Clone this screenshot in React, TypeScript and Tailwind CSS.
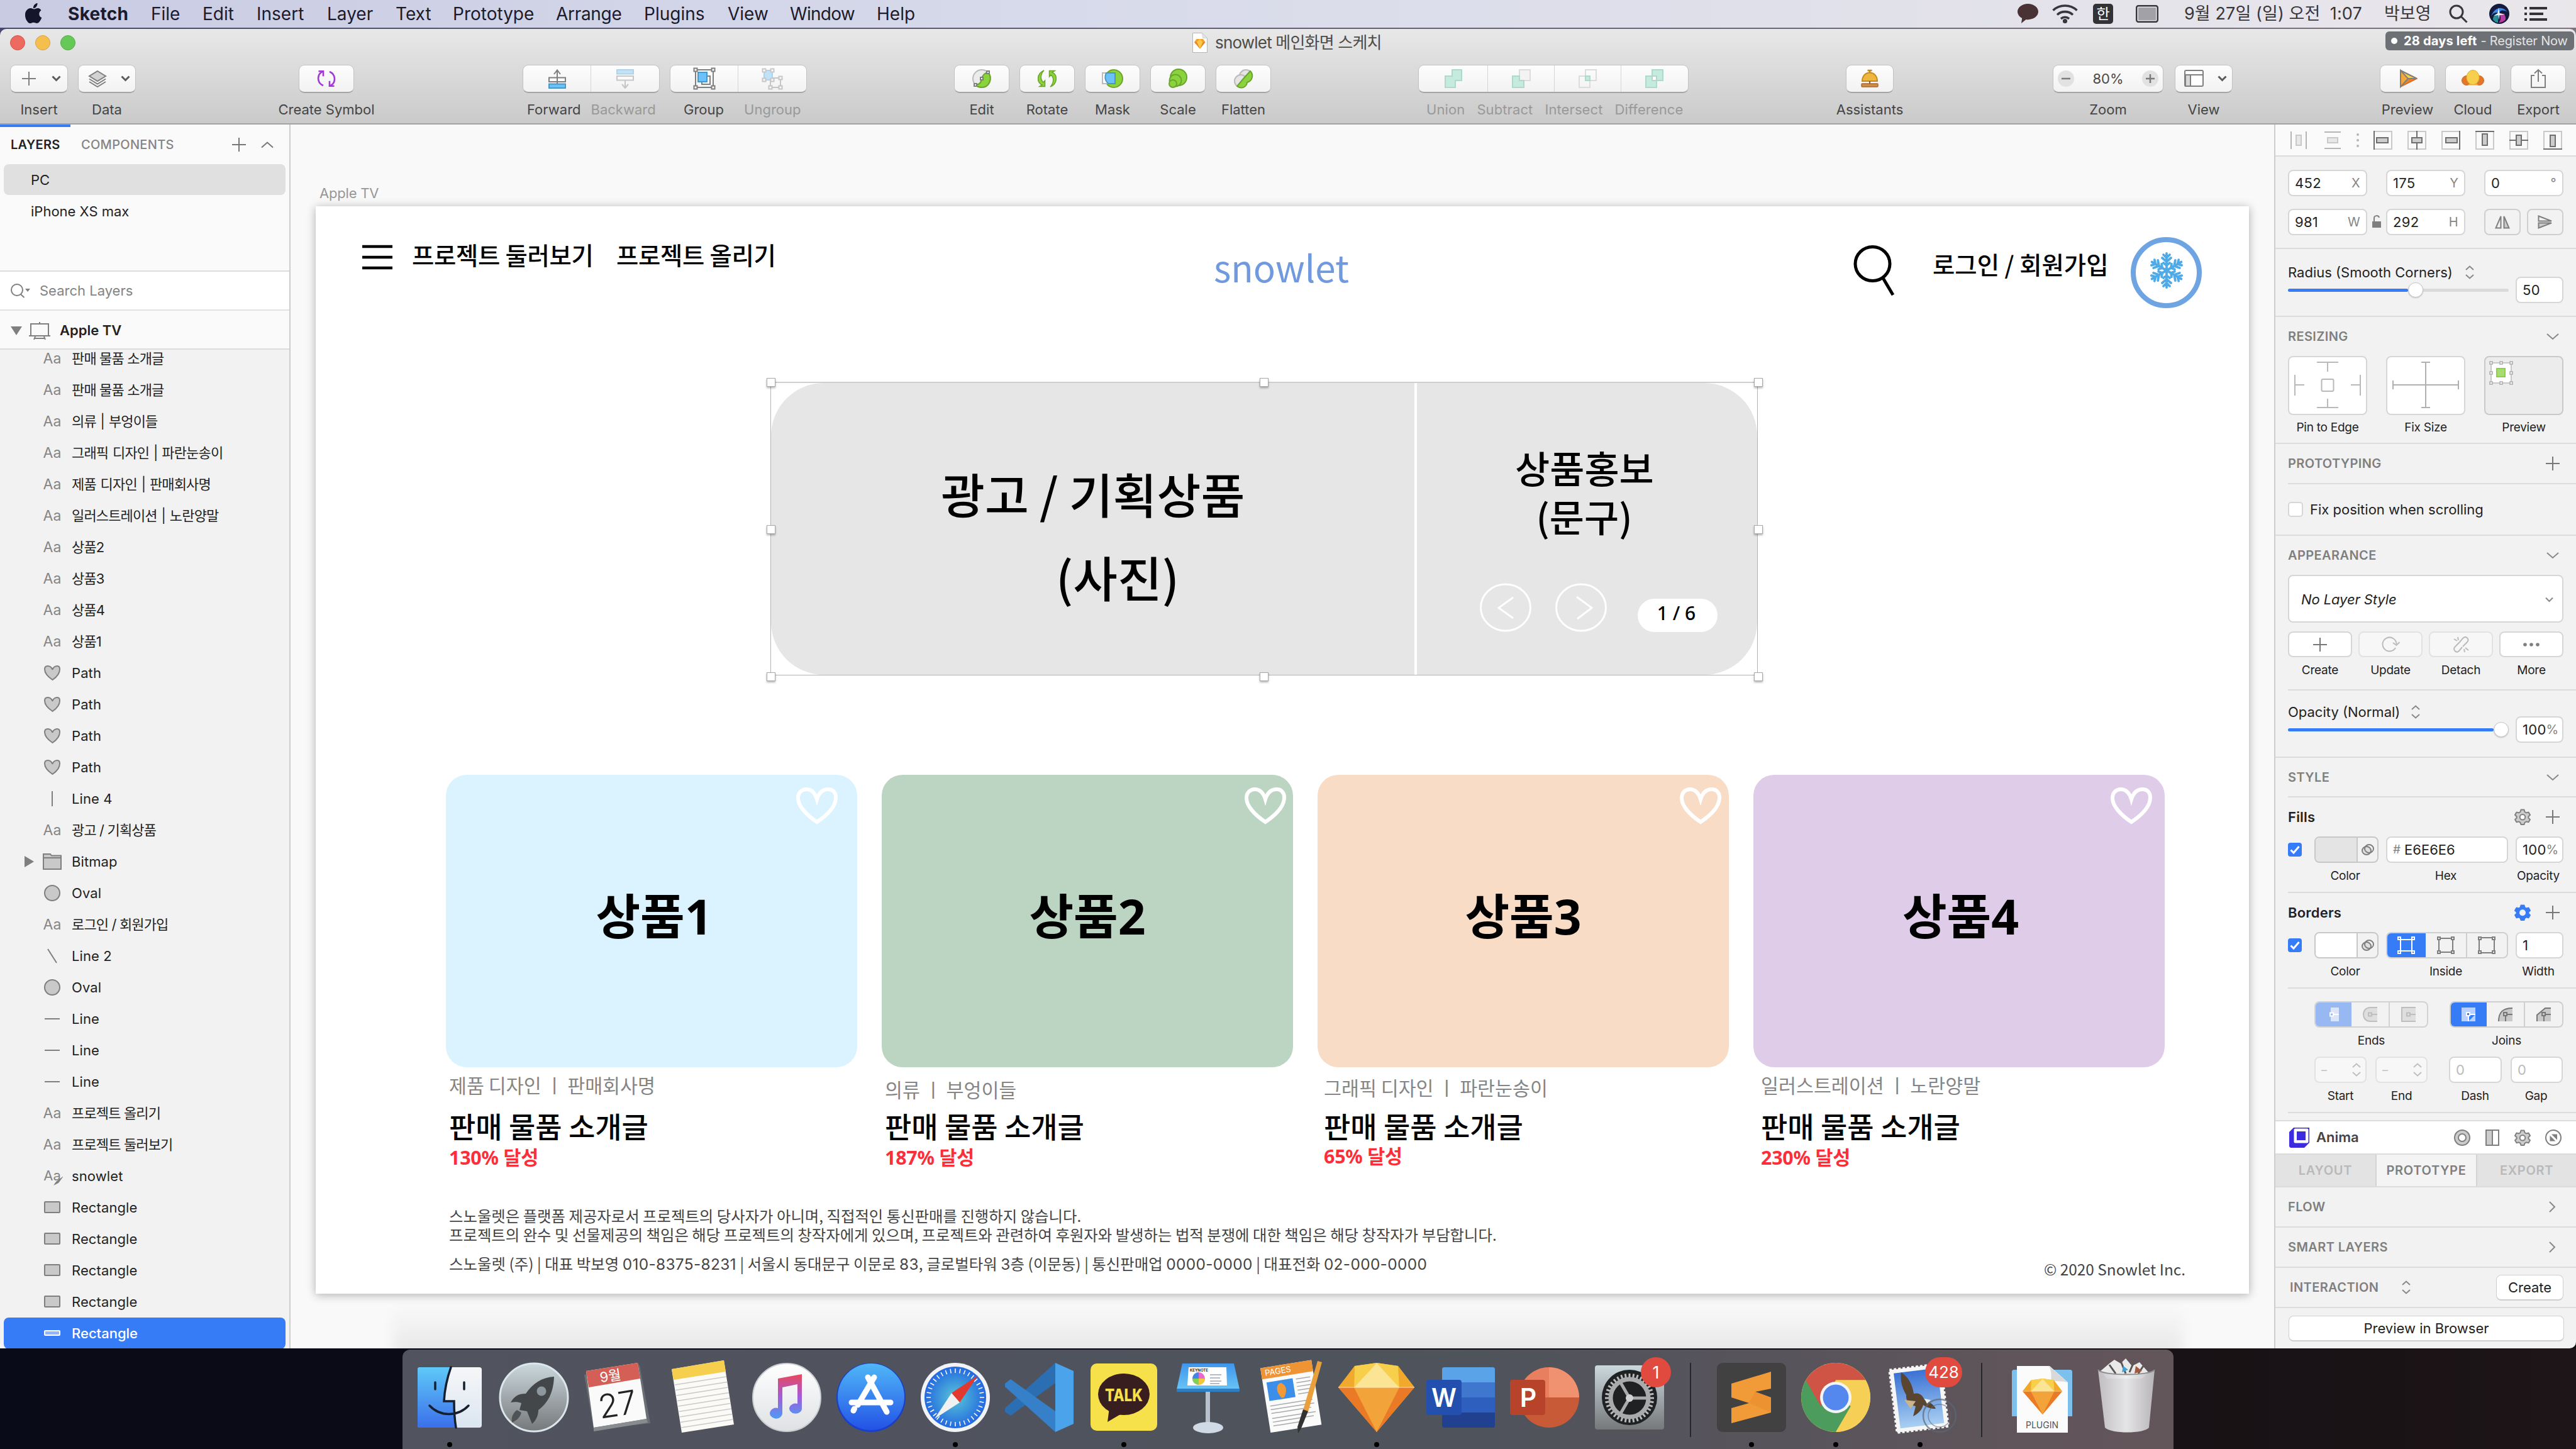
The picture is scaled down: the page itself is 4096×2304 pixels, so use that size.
import React from 'react';

type Kids = { children?: React.ReactNode };

/* ---------- menu bar ---------- */

const menus: [string, string][] = [
  ['Sketch', 'w-[132px] font-bold tracking-[0.3px]'],
  ['File', 'w-[82px]'],
  ['Edit', 'w-[86px]'],
  ['Insert', 'w-[112px]'],
  ['Layer', 'w-[109px]'],
  ['Text', 'w-[91px]'],
  ['Prototype', 'w-[164px]'],
  ['Arrange', 'w-[140px] tracking-[-0.3px]'],
  ['Plugins', 'w-[133px]'],
  ['View', 'w-[99px]'],
  ['Window', 'w-[138px] tracking-[-0.7px]'],
  ['Help', 'w-[80px]'],
];

function MenuBar() {
  return (
    <div className="flex h-[44px] shrink-0 items-center bg-linear-to-r from-[#c9cbe3] via-[#d7daea] via-40% to-[#eae7eb] text-[28px] leading-[44px] text-[#1b1b2e]">
      <div className="flex w-[108px] justify-center">
        <svg className="h-[34px] w-[28px]" viewBox="0 0 28 34" fill="#14142a">
          <path d="M19.5 0c.3 2.200-.6 4.200-1.800 5.700-1.200 1.500-3 2.500-4.800 2.400-.3-2 .7-4.200 1.800-5.500C15.900 1.200 17.900.2 19.500 0zM25.500 11.600c-2 1.300-3.200 3.200-3.200 5.600 0 2.800 1.600 5 4 5.900-.5 1.600-1.300 3.200-2.300 4.700-1.400 2.100-2.900 4.200-5.200 4.200-2.200 0-2.900-1.300-5.500-1.300s-3.400 1.300-5.500 1.400c-2.200.1-3.900-2.200-5.300-4.300C-.3 23.500-1.300 16 2 11.800c1.600-2.400 4.200-3.800 6.800-3.800 2.200 0 3.900 1.400 5.500 1.400 1.500 0 3.300-1.600 6-1.500 1.100 0 3.700.5 5.200 3.700z" />
        </svg>
      </div>
      {menus.map(([t, c]) => (
        <div key={t} className={c}>{t}</div>
      ))}
      <div className="flex-1" />
      <div className="flex w-[888px] items-center text-[#37363b]">
        <svg className="mr-[22px] h-[32px] w-[33px]" viewBox="0 0 33 32" fill="#4a3133">
          <path d="M16.500 0C25.600 0 33 5.600 33 12.600S25.600 25.200 16.500 25.200c-1 0-2-.1-3-.2L6 31l1.200-8C2.900 20.700 0 16.900 0 12.600 0 5.600 7.400 0 16.500 0z" />
        </svg>
        <svg className="mr-[24px] h-[30px] w-[41px]" viewBox="0 0 41 30" fill="none" stroke="#37363b" strokeWidth="3.600">
          <path d="M1.500 9.500C12-.5 29-.5 39.500 9.500M8 16.500c7-6.500 18-6.500 25 0M14 22.800c3.700-3.400 9.300-3.400 13 0" />
          <circle cx="20.500" cy="26.500" r="1.800" />
        </svg>
        <div className="mr-[36px] flex h-[32px] w-[32px] items-center justify-center rounded-[5px] bg-[#333237] text-[23px] leading-none text-white">한</div>
        <svg className="mr-[41px] h-[28px] w-[36px]" viewBox="0 0 36 28">
          <rect x="1.200" y="1.200" width="33.600" height="25.600" rx="3" fill="none" stroke="#37363b" strokeWidth="2.400" />
          <rect x="4" y="4" width="28" height="20" fill="#a3a1a8" />
        </svg>
        <div className="w-[318px] text-[27px] tracking-[0.1px] whitespace-pre">9월 27일 (일) 오전  1:07</div>
        <div className="w-[103px] text-[27px]">박보영</div>
        <svg className="mr-[34px] h-[30px] w-[30px]" viewBox="0 0 30 30" fill="none" stroke="#37363b" strokeWidth="3">
          <circle cx="12" cy="12" r="10" /><path d="M19 19l9.500 9.500" />
        </svg>
        <svg className="mr-[24px] h-[32px] w-[32px]" viewBox="0 0 32 32">
          <circle cx="16" cy="16" r="16" fill="#141a3c" />
          <path d="M3 20C8 6 20 2 29 13 22 9 16 10 16 16 12 12 6 14 3 20z" fill="#3a8bf0" />
          <path d="M16 16c6-2 11 2 10 9-3 4-8 5-11 5 4-4 4-9 1-14z" fill="#b83ba0" />
          <path d="M16 16C10 15 6 19 6 25c2 3 5 5 8 5 0-5 0-9 2-14z" fill="#2cc5c0" opacity=".7" />
          <path d="M15 6l1.500 9 9 2-9 1-1 8-1-8-7 1 6-4z" fill="#fff" opacity=".9" />
        </svg>
        <svg className="h-[22px] w-[36px]" viewBox="0 0 36 22" fill="#333237">
          <path d="M0 0h4v4H0zM8 0h28v4H8zM0 9h4v4H0zM8 9h22v4H8zM0 18h4v4H0zM8 18h28v4H8z" />
        </svg>
      </div>
    </div>
  );
}

/* ---------- toolbar ---------- */

const G = '#7f7f7f';

function Cell({ children, className = '' }: Kids & { className?: string }) {
  return <div className={`flex h-full items-center justify-center ${className}`}>{children}</div>;
}

function Ico({ children, dim }: Kids & { dim?: boolean }) {
  return (
    <svg className={`h-[44px] w-[44px] shrink-0 ${dim ? 'opacity-40' : ''}`} viewBox="0 0 44 44" fill="none" stroke={G} strokeWidth="2">
      {children}
    </svg>
  );
}

const box = 'flex h-[45px] w-full overflow-hidden rounded-[9px] border border-[#c2c2c2] border-b-2 border-b-[#a5a5a5] bg-linear-to-b from-[#fdfdfd] to-[#f2f2f2]';

function Tool({ w, label, children }: Kids & { w: string; label: string }) {
  return (
    <div className={`flex shrink-0 flex-col items-center ${w}`}>
      <div className={`${box} items-center justify-center`}>{children}</div>
      <div className="mt-[9px] text-[22px] leading-[34px] whitespace-nowrap text-[#454545]">{label}</div>
    </div>
  );
}

function Chev() {
  return <svg className="h-[10px] w-[15px]" viewBox="0 0 15 10" fill="none" stroke="#5a5a5a" strokeWidth="3"><path d="M1.500 1.500l6 6 6-6" /></svg>;
}

function Handles({ pts, s = 5 }: { pts: [number, number][]; s?: number }) {
  return <>{pts.map(([x, y], i) => <rect key={i} x={x - s / 2} y={y - s / 2} width={s} height={s} fill="#fff" />)}</>;
}

function Toolbar() {
  const green = '#8bd33e';
  const dg = '#6aa52a';
  return (
    <div className="flex h-[152px] shrink-0 flex-col border-b-2 border-[#a3a3a3] bg-linear-to-b from-[#e8e8e8] to-[#cacaca]">
      <div className="flex h-[44px] items-center">
        <div className="flex w-[1896px] gap-[16px] pl-[16px]">
          <div className="h-[24px] w-[24px] rounded-full border border-[#d6544a] bg-[#ec6a5f]" />
          <div className="h-[24px] w-[24px] rounded-full border border-[#d8a13a] bg-[#f5bf4f]" />
          <div className="h-[24px] w-[24px] rounded-full border border-[#54ac41] bg-[#66c957]" />
        </div>
        <svg className="mr-[12px] h-[32px] w-[24px]" viewBox="0 0 24 32">
          <path d="M.5.5h15l8 8v23H.5z" fill="#fff" stroke="#b5b5b5" />
          <path d="M15.500.5l1 8h7z" fill="#e4e4e4" stroke="#c4c4c4" strokeWidth=".6" />
          <path d="M3 15l3.500-5h10.500L20.500 15 12 25.500z" fill="#f0a02c" /><path d="M3 15h17.500L12 25.500z" fill="#e8832a" /><path d="M7 15l5-5 4.500 5L12 25.500z" fill="#fbc847" />
        </svg>
        <div className="text-[26px] leading-[44px] tracking-[-0.800px] whitespace-nowrap text-[#4c4c4c]">snowlet 메인화면 스케치</div>
        <div className="ml-auto mt-[-6px] mr-[3px] flex h-[30px] w-[300px] items-center rounded-[6px] bg-[#6d7176] text-[20px] leading-[30px] whitespace-nowrap text-[#e4e4e4]">
          <span className="ml-[9px] mr-[10px] h-[10px] w-[10px] rounded-full bg-white" />
          <b className="tracking-[0.200px] text-white">28 days left</b><span className="ml-[6px] tracking-[-0.2px]">- Register Now</span>
        </div>
      </div>
      <div className="mt-[13px] flex pl-[16px]">
        <Tool w="w-[92px] mr-[16px]" label="Insert">
          <svg className="ml-[7px] mr-[24px] h-[24px] w-[24px]" viewBox="0 0 24 24" stroke={G} strokeWidth="2"><path d="M12 1v22M1 12h22" /></svg><Chev />
        </Tool>
        <Tool w="w-[92px] mr-[259px]" label="Data">
          <svg className="ml-[6px] mr-[22px] h-[27px] w-[30px]" viewBox="0 0 30 27" fill="none" stroke={G} strokeWidth="2"><path d="M15 1l13 8-13 8L2 9z" fill="#d2d2d2" /><path d="M2 13.500l13 8 13-8M2 18l13 8 13-8" /></svg><Chev />
        </Tool>
        <Tool w="w-[88px] mr-[268px]" label="Create Symbol">
          <Ico><g stroke="#a238d6" strokeWidth="2.600"><path d="M17 33C7 29 6 15 16.500 10.500M27 11c10 4 11 18 .5 22.500" /><path d="M9.500 10.200h7.500v8M34.500 33.800H27v-8" /></g></Ico>
        </Tool>
        <div className="mr-[16px] w-[218px]">
          <div className={box}>
            <Cell className="w-[109px] border-r border-[#d5d5d5]"><Ico><path d="M22 37V9M17 15l5-6.500 5 6.500" /><rect x="9" y="20.500" width="26" height="6.500" fill="#fff" /><path d="M22 29v-9" /><rect x="9" y="30.500" width="26" height="6.500" fill="#6bc1fa" stroke="#4a97c6" /></Ico></Cell>
            <Cell className="w-[109px]"><Ico dim><path d="M22 24v13M17 31l5 6 5-6" /><rect x="9" y="8" width="26" height="6.500" fill="#6bc1fa" stroke="#4a97c6" /><rect x="9" y="18" width="26" height="6.500" fill="#fff" /></Ico></Cell>
          </div>
          <div className="mt-[9px] flex gap-[16px] pl-[7px] text-[22px] leading-[34px] whitespace-nowrap text-[#454545]"><span>Forward</span><span className="text-[#999]">Backward</span></div>
        </div>
        <div className="w-[218px] mr-[234px]">
          <div className={box}>
            <Cell className="w-[109px] border-r border-[#d5d5d5]"><Ico><rect x="8" y="8" width="28" height="28" /><rect x="18" y="18" width="13" height="13" fill="#fff" /><rect x="12" y="12" width="14" height="15" fill="#6bc1fa" stroke="#4a97c6" /><Handles pts={[[8, 8], [36, 8], [8, 36], [36, 36]]} /></Ico></Cell>
            <Cell className="w-[109px]"><Ico dim><rect x="19" y="21" width="16" height="15" /><rect x="9" y="9" width="13" height="15" fill="#6bc1fa" stroke="#4a97c6" /><Handles pts={[[9, 9], [22, 9], [9, 24], [22, 24], [35, 21], [35, 36], [19, 36]]} /></Ico></Cell>
          </div>
          <div className="mt-[9px] flex gap-[32px] pl-[22px] text-[22px] leading-[34px] whitespace-nowrap text-[#454545]"><span>Group</span><span className="text-[#999]">Ungroup</span></div>
        </div>
        <Tool w="w-[88px] mr-[16px]" label="Edit"><Ico><circle cx="22" cy="22" r="14" fill="#ececec" stroke="#bbb" /><path d="M32 12c8 9 2 24-10 24-5 0-8-2-10-4 6 0 9-3 10-10 1-5 5-9 10-10z" fill={green} stroke={dg} /><Handles pts={[[32, 12], [22, 22], [12, 32]]} s={4} /></Ico></Tool>
        <Tool w="w-[88px] mr-[16px]" label="Rotate"><Ico><g fill={green} stroke={dg} strokeWidth="1.500"><path d="M17 9C5 14 5 28 14 32l-4 2.500h8.500V25l-2.500 3C10 23 12 14 17 9zM27 35c12-5 12-19 3-23l4-2.500h-8.500V19l2.500-3c6 5 4 14-1 19z" /></g></Ico></Tool>
        <Tool w="w-[88px] mr-[16px]" label="Mask"><Ico><circle cx="24" cy="22" r="14" fill={green} stroke={dg} /><rect x="6" y="13" width="20" height="17" stroke="#bbb" fill="#fff" /><path d="M12 13h14v17H15c-5-5-6-11-3-17z" fill="#6bc1fa" stroke="#4a97c6" /></Ico></Tool>
        <Tool w="w-[88px] mr-[16px]" label="Scale"><Ico><g fill={green} stroke={dg}><circle cx="23" cy="20" r="13" /><circle cx="18" cy="25" r="9.500" /><circle cx="14" cy="30" r="6" /></g></Ico></Tool>
        <Tool w="w-[88px] mr-[234px]" label="Flatten"><Ico><circle cx="26" cy="18" r="10" fill="#e5e5e5" stroke="#bbb" /><circle cx="18" cy="26" r="10" fill="#e5e5e5" stroke="#bbb" /><path d="M33 10c6 6 3 16-5 18-1 8-9 11-16 6L23 21z" fill={green} stroke={dg} /></Ico></Tool>
        <div className="w-[430px] mr-[250px]">
          <div className={box}>
            <Cell className="w-[110px] border-r border-[#d5d5d5]"><Ico><path d="M20 8h15v17h-10v11H9V18h11z" fill="#c5ebde" stroke="#b0d9ca" /></Ico></Cell>
            <Cell className="w-[106px] border-r border-[#d5d5d5]"><Ico><rect x="19" y="8" width="17" height="17" fill="#f3f3f3" stroke="#dcdcdc" /><path d="M8 18h11v7h7v11H8z" fill="#c5ebde" stroke="#b0d9ca" /></Ico></Cell>
            <Cell className="w-[106px] border-r border-[#d5d5d5]"><Ico><rect x="18" y="8" width="17" height="17" stroke="#dcdcdc" /><rect x="8" y="18" width="17" height="18" stroke="#dcdcdc" /><rect x="18" y="18" width="7" height="7" fill="#c5ebde" stroke="#b0d9ca" /></Ico></Cell>
            <Cell className="w-[106px]"><Ico><path d="M18 8h17v17H25v11H8V18h10z" fill="#c5ebde" stroke="#b0d9ca" /><rect x="18" y="18" width="7" height="7" fill="#fff" stroke="#b0d9ca" /></Ico></Cell>
          </div>
          <div className="mt-[9px] flex gap-[19px] pl-[13px] text-[22px] leading-[34px] tracking-[0.100px] whitespace-nowrap text-[#999]"><span>Union</span><span>Subtract</span><span>Intersect</span><span>Difference</span></div>
        </div>
        <Tool w="w-[76px] mr-[253px]" label="Assistants"><Ico><rect x="9" y="30" width="26" height="5" rx="1" fill="#d08a4a" stroke="#a86a30" strokeWidth="1.500" /><path d="M22 8v4M18.500 9h7" stroke="#c68a1c" strokeWidth="2.500" /><path d="M10 26c0-18 24-18 24 0z" fill="#edb63c" stroke="#c68a1c" /><path d="M22 26v4" stroke="#8a5a20" strokeWidth="2" /></Ico></Tool>
        <Tool w="w-[176px] mr-[18px]" label="Zoom">
          <div className="flex w-full items-center justify-between px-[7px] text-[22px] leading-[40px] text-[#4a4a4a]">
            <svg className="h-[26px] w-[26px]" viewBox="0 0 26 26"><circle cx="13" cy="13" r="13" fill="#e2e2e2" /><path d="M6 13h14" stroke="#7a7a7a" strokeWidth="2.500" /></svg>
            80%
            <svg className="h-[26px] w-[26px]" viewBox="0 0 26 26"><circle cx="13" cy="13" r="13" fill="#e2e2e2" /><path d="M6 13h14M13 6v14" stroke="#7a7a7a" strokeWidth="2.500" /></svg>
          </div>
        </Tool>
        <Tool w="w-[92px] mr-[234px]" label="View">
          <svg className="ml-[6px] mr-[21px] h-[28px] w-[32px]" viewBox="0 0 32 28" fill="none" stroke={G} strokeWidth="2"><rect x="1" y="1" width="29" height="25" rx="2" fill="#fff" /><path d="M1 8h29" /><path d="M2 8h8v18H2z" fill="#d8d8d8" /></svg><Chev />
        </Tool>
        <Tool w="w-[88px] mr-[16px]" label="Preview"><Ico><path d="M11 9l26 13-26 13z" fill="#e9822e" stroke="#d06a20" strokeWidth="1.500" /><path d="M11 9l26 13H22z" fill="#f8ce49" /><path d="M11 9v26l12-13z" fill="#f3a73b" /></Ico></Tool>
        <Tool w="w-[88px] mr-[16px]" label="Cloud"><Ico><circle cx="12" cy="25" r="7.500" fill="#e2772b" stroke="#c96a1c" strokeWidth="1" /><circle cx="32" cy="25" r="7.500" fill="#e2772b" stroke="#c96a1c" strokeWidth="1" /><path d="M11 32.500c6 0 7-4 6-12h11c-1 8 0 12 6 12z" fill="#f3a73b" stroke="none" /><ellipse cx="22" cy="20" rx="10" ry="11.500" fill="#f6d04d" stroke="#e0b030" strokeWidth="1" /></Ico></Tool>
        <Tool w="w-[88px]" label="Export"><Ico><path d="M16 17h-5v19h22V17h-5M22 27V8M16 13.500L22 8l6 5.500" /></Ico></Tool>
      </div>
    </div>
  );
}

/* ---------- left sidebar ---------- */

type Kind = 'text' | 'heart' | 'vline' | 'folder' | 'oval' | 'diag' | 'line' | 'pen' | 'rect' | 'sel';
const layers: [Kind, string][] = [
  ['text', '판매 물품 소개글'], ['text', '판매 물품 소개글'], ['text', '의류 | 부엉이들'], ['text', '그래픽 디자인 | 파란눈송이'],
  ['text', '제품 디자인 | 판매회사명'], ['text', '일러스트레이션 | 노란양말'], ['text', '상품2'], ['text', '상품3'], ['text', '상품4'], ['text', '상품1'],
  ['heart', 'Path'], ['heart', 'Path'], ['heart', 'Path'], ['heart', 'Path'], ['vline', 'Line 4'], ['text', '광고 / 기획상품'],
  ['folder', 'Bitmap'], ['oval', 'Oval'], ['text', '로그인 / 회원가입'], ['diag', 'Line 2'], ['oval', 'Oval'], ['line', 'Line'], ['line', 'Line'], ['line', 'Line'],
  ['text', '프로젝트 올리기'], ['text', '프로젝트 둘러보기'], ['pen', 'snowlet'], ['rect', 'Rectangle'], ['rect', 'Rectangle'], ['rect', 'Rectangle'], ['rect', 'Rectangle'], ['sel', 'Rectangle'],
];

function LayerIcon({ kind }: { kind: Kind }) {
  if (kind === 'text') return <div className="w-[34px] text-center text-[23px] tracking-[0.2px] text-[#858585]">Aa</div>;
  return (
    <svg className="h-[34px] w-[34px]" viewBox="0 0 34 34" fill="#c9c9c9" stroke={G} strokeWidth="2">
      {kind === 'heart' && <path d="M17.500 28C10 23 5 17 5 11c0-3 2-5 5-5s6 2 7.500 6C18 8 22 6 25 6s4 2 4 5c0 6-4 12-11.500 17z" />}
      {kind === 'vline' && <path d="M17 5v24" />}
      {kind === 'folder' && <><path d="M3 5h11l2 2.500h15V29H3z" /><path d="M3 11h28" /></>}
      {kind === 'oval' && <circle cx="17" cy="17" r="12" />}
      {kind === 'diag' && <path d="M10 6l14 22" />}
      {kind === 'line' && <path d="M5 17h24" />}
      {kind === 'pen' && <><text x="17" y="24" textAnchor="middle" fontSize="22" fill="#858585" stroke="none">Aa</text><path d="M19 32l4-6 12-9-8 11z" fill={G} stroke="none" /></>}
      {kind === 'rect' && <rect x="5" y="8" width="24" height="17" rx="1" />}
      {kind === 'sel' && <rect x="5" y="13" width="24" height="7" rx="1" fill="#8db6ff" stroke="#fff" />}
    </svg>
  );
}

function Sidebar() {
  return (
    <div className="flex w-[462px] shrink-0 flex-col border-r-2 border-[#cdcdcd] bg-[#fafafa] text-[22px] text-[#222]">
      <div className="h-[4px] w-[112px] bg-[#377cf7]" />
      <div className="flex h-[55px] items-center pl-[17px] text-[20px] tracking-[0.3px]">
        <div className="w-[112px] font-semibold">LAYERS</div>
        <div className="w-[240px] font-medium text-[#858585]">COMPONENTS</div>
        <svg className="mr-[24px] h-[22px] w-[22px]" viewBox="0 0 22 22" stroke="#777" strokeWidth="2"><path d="M11 0v22M0 11h22" /></svg>
        <svg className="h-[12px] w-[20px]" viewBox="0 0 20 12" fill="none" stroke="#777" strokeWidth="2"><path d="M1 10.500l9-8 9 8" /></svg>
      </div>
      <div className="h-[175px] border-b-2 border-[#dcdcdc] pt-[4px]">
        <div className="mx-[6px] h-[49px] rounded-[8px] bg-[#e0e0e0] pl-[43px] leading-[50px]">PC</div>
        <div className="pl-[49px] leading-[52px]">iPhone XS max</div>
      </div>
      <div className="flex h-[62px] items-center border-b-2 border-[#e2e2e2] bg-white pl-[17px] text-[#848484]">
        <svg className="mr-[15px] h-[24px] w-[31px]" viewBox="0 0 31 24" fill="none" stroke={G} strokeWidth="2"><circle cx="10" cy="11" r="9" /><path d="M16 18l5.500 5" /><path d="M23 9h8l-4 5z" fill={G} stroke="none" /></svg>
        Search Layers
      </div>
      <div className="flex h-[62px] items-center border-b-2 border-[#dcdcdc] pt-[3px] pl-[17px]">
        <svg className="mr-[11px] h-[14px] w-[18px]" viewBox="0 0 18 14" fill={G}><path d="M0 0h18L9 14z" /></svg>
        <svg className="mr-[15px] h-[30px] w-[34px]" viewBox="0 0 34 30" fill="none" stroke={G} strokeWidth="2"><path d="M3 23V4h28v19M0 23h34M10 24l-2 5M24 24l2 5M9 27h16M17 1v3" /></svg>
        <b className="font-semibold">Apple TV</b>
      </div>
      <div className="flex-1 overflow-hidden rounded-bl-[10px] bg-[#f2f2f2]">
        <div className="mt-[-11px]">
          {layers.map(([k, t], i) => (
            <div key={i} className={`mx-[6px] flex h-[50px] items-center rounded-[8px] leading-[50px] ${k === 'sel' ? 'bg-[#377cf7] text-white' : ''}`}>
              <div className="w-[60px] pl-[33px]">
                {k === 'folder' && <svg className="h-[18px] w-[15px]" viewBox="0 0 15 18" fill={G}><path d="M0 0v18l15-9z" /></svg>}
              </div>
              <LayerIcon kind={k} />
              <div className={`pl-[14px] whitespace-nowrap ${/[가-힣]/.test(t) ? 'tracking-[-0.850px]' : k === 'sel' ? 'font-medium' : 'tracking-[0.1px]'} ${t.includes('|') ? '[word-spacing:1.500px]' : ''}`}>{t}</div>
            </div>
          ))}
        </div>
      </div>
    </div>
  );
}

/* ---------- canvas ---------- */

const cards = [
  { name: '상품1', bg: 'bg-[#daf3fe]', shift: 'pl-[8px]', heart: 'left-[556px]', meta: '제품 디자인 ㅣ 판매회사명', pct: '130% 달성', pad: 'pl-[5px]', mt: 'mt-[11px]', gap: 'mt-[22px]', pt: 'mt-[12px]' },
  { name: '상품2', bg: 'bg-[#bcd4c2]', shift: '', heart: 'left-[576px]', meta: '의류 ㅣ 부엉이들', pct: '187% 달성', pad: 'pl-[5px]', mt: 'mt-[18px]', gap: 'mt-[15px]', pt: 'mt-[12px]' },
  { name: '상품3', bg: 'bg-[#f8dcc6]', shift: '', heart: 'left-[575px]', meta: '그래픽 디자인 ㅣ 파란눈송이', pct: '65% 달성', pad: 'pl-[10px]', mt: 'mt-[15px]', gap: 'mt-[18px]', pt: 'mt-[10px]' },
  { name: '상품4', bg: 'bg-[#dfcce8]', shift: 'pl-[5px]', heart: 'left-[567px]', meta: '일러스트레이션 ㅣ 노란양말', pct: '230% 달성', pad: 'pl-[12px]', mt: 'mt-[11px]', gap: 'mt-[22px]', pt: 'mt-[12px]' },
];

function Snowflake() {
  return (
    <svg className="h-[60px] w-[60px]" viewBox="-30 -30 60 60" fill="none" stroke="#4faae8" strokeWidth="3.800" strokeLinecap="round">
      {[0, 60, 120, 180, 240, 300].map((a) => (
        <g key={a} transform={`rotate(${a})`}>
          <path d="M0 0V-27M0-8l-5-4M0-8l5-4M0-14l-7-6M0-14l7-6M0-20l-5-5M0-20l5-5" />
        </g>
      ))}
    </svg>
  );
}

const handlePos = [
  'left-[-7px] top-[-8px]', 'left-[777px] top-[-8px]', 'left-[1563px] top-[-8px]',
  'left-[-7px] top-[226px]', 'left-[1563px] top-[226px]',
  'left-[-7px] top-[460px]', 'left-[777px] top-[460px]', 'left-[1563px] top-[460px]',
];

function Banner() {
  return (
    <div className="absolute left-[723px] top-[279px] h-[467px] w-[1570px] border border-t-2 border-[#b4b4b4] border-t-[#cfcfcf]">
      <div className="flex h-full overflow-hidden rounded-[84px] bg-[#e6e6e6] font-medium text-black">
        <div className="relative w-[1023px] shrink-0">
          <div className="absolute left-[270px] top-[125px] text-[76px] leading-[100px] whitespace-nowrap">광고 / 기획상품</div>
          <div className="absolute left-[453px] top-[258px] text-[76.8px] leading-[100px] whitespace-nowrap">(사진)</div>
        </div>
        <div className="w-[4px] shrink-0 bg-white" />
        <div className="relative flex-1">
          <div className="absolute left-[156px] top-[95px] w-[220px] text-center text-[60px] leading-[77px] whitespace-nowrap">상품홍보<br />(문구)</div>
          <svg className="absolute left-[98px] top-[314px] h-[84px] w-[210px]" viewBox="0 0 210 84" fill="none" stroke="#fff" strokeWidth="3">
            <ellipse cx="43" cy="43" rx="39.500" ry="37" /><path d="M55 27L32 43.500 55 60" />
            <ellipse cx="163" cy="43" rx="39.500" ry="37" /><path d="M156 26l24 17.500L157 61" />
          </svg>
          <div className="absolute left-[351px] top-[343px] h-[53px] w-[127px] rounded-full bg-white pr-[4px] text-center text-[30px] leading-[46px] [font-family:'Noto_Sans',sans-serif]">1 / 6</div>
        </div>
      </div>
      {handlePos.map((p) => (
        <div key={p} className={`absolute h-[14px] w-[14px] border border-[#a9a9a9] bg-white shadow-[0_2px_3px_rgba(0,0,0,0.3)] ${p}`} />
      ))}
    </div>
  );
}

function Num({ children }: Kids) {
  return <span className="tracking-[0.350px] [font-family:Inter,sans-serif]">{children}</span>;
}

function Artboard() {
  return (
    <div className="relative h-[1729px] w-[3074px] bg-white text-black shadow-[0_2px_14px_rgba(0,0,0,0.3)] [font-family:'Noto_Sans_CJK_KR',sans-serif]">
      <div className="flex h-[200px] items-start pl-[74px] text-[38.400px] leading-[60px] font-medium whitespace-nowrap">
        <svg className="mt-[61px] mr-[31px] h-[40px] w-[48px]" viewBox="0 0 48 40" stroke="#000" strokeWidth="4.500"><path d="M0 3h48M0 20h48M0 37h48" /></svg>
        <div className="mt-[46px] w-[325px] tracking-[-0.3px]">프로젝트 둘러보기</div>
        <div className="mt-[46px] w-[950px] tracking-[-0.3px]">프로젝트 올리기</div>
        <div className="mt-[66px] w-[1017px] text-[58.300px] font-normal text-[#7099de]">snowlet</div>
        <svg className="mt-[61px] w-[66px] h-[84px] mr-[60px]" viewBox="0 0 66 84" fill="none" stroke="#000" strokeWidth="5"><ellipse cx="30.500" cy="30.500" rx="27.500" ry="27" /><path d="M47 53l16 27" /></svg>
        <div className="mt-[61px] w-[315px]">로그인 / 회원가입</div>
        <div className="mt-[49px] flex h-[113px] w-[113px] items-center justify-center rounded-full border-[8px] border-[#6fa4e2] pb-[6px]"><Snowflake /></div>
      </div>
      <Banner />
      <div className="mt-[704px] flex gap-[39px] pl-[207px]">
        {cards.map((c) => (
          <div key={c.name} className="w-[654px] whitespace-nowrap">
            <div className={`relative flex h-[465px] items-center justify-center rounded-[33px] ${c.bg}`}>
              <div className={`mt-[-14px] text-[76.800px] leading-[100px] font-bold [font-family:'Noto_Sans','Noto_Sans_CJK_KR',sans-serif] ${c.shift}`}>{c.name}</div>
              <svg className={`absolute top-[19px] h-[60px] w-[68px] ${c.heart}`} viewBox="0 0 68 60" fill="none" stroke="#fff" strokeWidth="6"><path d="M34 56C16 44 4 30 4 18 4 9 10 4 17 4c8 0 14 6 17 16C37 10 43 4 52 4c7 0 12 5 12 13 0 13-12 27-30 39z" /></svg>
            </div>
            <div className={c.pad}>
              <div className={`text-[30.400px] leading-[34px] text-[#858585] ${c.mt}`}>{c.meta}</div>
              <div className={`text-[46px] leading-[50px] font-medium ${c.gap}`}>판매 물품 소개글</div>
              <div className={`text-[30.400px] leading-[30px] font-bold tracking-[-0.2px] text-[#fc2e3a] [font-family:'Noto_Sans','Noto_Sans_CJK_KR',sans-serif] ${c.pt}`}>{c.pct}</div>
            </div>
          </div>
        ))}
      </div>
      <div className="absolute left-[212px] top-[1590px] text-[24.400px] leading-[30.500px] whitespace-nowrap text-[#444]">
        <div>스노울렛은 플랫폼 제공자로서 프로젝트의 당사자가 아니며, 직접적인 통신판매를 진행하지 않습니다.</div>
        <div>프로젝트의 완수 및 선물제공의 책임은 해당 프로젝트의 창작자에게 있으며, 프로젝트와 관련하여 후원자와 발생하는 법적 분쟁에 대한 책임은 해당 창작자가 부담합니다.</div>
        <div className="mt-[15px] tracking-[0.050px]">스노울렛 (주) | 대표 박보영 <Num>010-8375-8231</Num> | 서울시 동대문구 이문로 <Num>83</Num>, 글로벌타워 <Num>3</Num>층 (이문동) | 통신판매업 <Num>0000-0000</Num> | 대표전화 <Num>02-000-0000</Num></div>
      </div>
      <div className="absolute right-[101px] top-[1675px] text-[24.400px] leading-[30px] text-[#444]">© 2020 Snowlet Inc.</div>
    </div>
  );
}

function Canvas() {
  return (
    <div className="relative flex-1 overflow-hidden bg-[#f9f9f9]">
      <div className="h-[129.500px] pt-[94px] pl-[46px] text-[22px] leading-[30px] tracking-[-0.2px] text-[#979797]">Apple TV</div>
      <div className="absolute bottom-[-20px] left-[163px] h-[90px] w-[2846px] bg-linear-to-b from-black/0 to-black/8 blur-[10px]" />
      <div className="pl-[40px]"><Artboard /></div>
    </div>
  );
}

/* ---------- inspector ---------- */

function Head({ children, icon = 'v' }: Kids & { icon?: 'v' | '+' | '>' }) {
  return (
    <div className="flex h-[62px] items-center justify-between pr-[26px] text-[20px] font-semibold tracking-[0.400px] text-[#7f7f7f]">
      {children}
      {icon === 'v' && <svg className="mr-[1px] h-[12px] w-[20px]" viewBox="0 0 20 12" fill="none" stroke="#888" strokeWidth="2"><path d="M1 2l9 8 9-8" /></svg>}
      {icon === '+' && <Plus />}
      {icon === '>' && <svg className="mr-[6px] h-[20px] w-[12px]" viewBox="0 0 12 20" fill="none" stroke="#888" strokeWidth="2"><path d="M2 2l8 8-8 8" /></svg>}
    </div>
  );
}

function Plus() {
  return <svg className="h-[22px] w-[22px]" viewBox="0 0 22 22" stroke="#777" strokeWidth="2"><path d="M11 0v22M0 11h22" /></svg>;
}

function Step({ dim }: { dim?: boolean }) {
  return <svg className={`h-[22px] w-[14px] ${dim ? 'opacity-50' : ''}`} viewBox="0 0 14 22" fill="none" stroke="#888" strokeWidth="2"><path d="M1 7l6-5.500L13 7M1 15l6 5.500 6-5.500" /></svg>;
}

function Field({ w, v, u, dim }: { w: string; v: string; u?: string; dim?: boolean }) {
  return (
    <div className={`flex h-[42px] items-center justify-between rounded-[8px] border-2 border-[#d6d6d6] bg-white px-[9px] text-[22px] leading-[38px] tracking-[0.3px] ${w}`}>
      <span className={dim ? 'text-[#bbb]' : ''}>{v}</span><span className="text-[20px] text-[#858585]">{u}</span>
    </div>
  );
}

function Gear({ blue }: { blue?: boolean }) {
  return (
    <svg className="h-[26px] w-[26px]" viewBox="0 0 26 26" fill={blue ? '#377cf7' : '#cdcdcd'} stroke={blue ? '#377cf7' : G} strokeWidth="2" strokeLinejoin="round">
      <path d="M10.500 1.500h5l1 3.500 2.500 1.400 3.500-.9 2.500 4.200-2.600 2.500v2.400l2.600 2.500-2.500 4.200-3.500-.9-2.500 1.400-1 3.200h-5l-1-3.200-2.500-1.400-3.500.9L1 17.100l2.600-2.500v-2.400L1 9.700l2.500-4.200 3.500.9L9.500 5z" />
      <circle cx="13" cy="13.300" r={blue ? 5 : 4.300} fill={blue ? '#f2f2f2' : '#fff'} stroke={blue ? 'none' : G} />
    </svg>
  );
}

function Check() {
  return <svg className="mr-[20px] h-[22px] w-[22px]" viewBox="0 0 22 22"><rect width="22" height="22" rx="4" fill="#377cf7" /><path d="M4.500 11.500l4.500 4.500 8.500-10" fill="none" stroke="#fff" strokeWidth="3" /></svg>;
}

function Well({ c }: { c: string }) {
  return (
    <div className="mr-[12px] flex h-[42px] w-[102px] overflow-hidden rounded-[8px] border-2 border-[#c8c8c8]">
      <div className={`w-[67px] border-r-2 border-[#c8c8c8] ${c}`} />
      <svg className="m-auto h-[18px] w-[20px]" viewBox="0 0 20 18" fill="none" stroke={G} strokeWidth="2"><ellipse cx="8" cy="10.500" rx="7" ry="6.500" fill="#ccc" fillOpacity=".5" /><ellipse cx="12" cy="7.500" rx="7" ry="6.500" /></svg>
    </div>
  );
}

function Lab({ w, children }: Kids & { w: string }) {
  return <div className={`text-center text-[19px] leading-[41px] tracking-[-0.25px] whitespace-nowrap ${w}`}>{children}</div>;
}

function SliderRow({ label, fill, value, unit, stepGap }: { label: string; fill: string; value: string; unit?: string; stepGap: string }) {
  return (
    <div className="flex pr-[20px]">
      <div className="w-[362px]">
        <div className={`flex items-center text-[22px] leading-[30px] whitespace-nowrap ${stepGap}`}>{label}<Step /></div>
        <div className="flex h-[26px] w-[351px] items-center">
          <div className={`h-[5px] rounded-full bg-[#377cf7] ${fill}`} />
          <div className="z-10 h-[24px] w-[24px] shrink-0 rounded-full border border-[#c6c6c6] bg-white shadow-[0_1px_2px_rgba(0,0,0,0.2)]" />
          <div className="h-[5px] flex-1 rounded-r-full bg-[#dadada]" />
        </div>
      </div>
      <div className="mt-[22px]"><Field w="w-[76px]" v={value} u={unit} /></div>
    </div>
  );
}

function Align({ i }: { i: number }) {
  const l = '#c9c9c9';
  const d = '#6f6f6f';
  return (
    <svg className="h-[30px] w-[54px]" viewBox="0 0 54 30" fill="none" stroke={l} strokeWidth="2">
      {i === 0 && <><path d="M15 1v28M39 1v28" stroke="#b5b5b5" /><rect x="23" y="7" width="8" height="16" fill="#e8e8e8" /></>}
      {i === 1 && <><path d="M14 2h26M14 28h26" stroke="#b5b5b5" /><rect x="19" y="11" width="16" height="8" fill="#e8e8e8" /></>}
      {i === 3 && <><path d="M14 1h27v28H14" /><path d="M13 0v30" stroke={d} /><rect x="17" y="11" width="18" height="8" fill="#ccc" stroke={d} /></>}
      {i === 4 && <><rect x="13" y="1" width="28" height="28" /><path d="M27 0v30" stroke={d} /><rect x="19" y="11" width="16" height="8" fill="#ccc" stroke={d} /></>}
      {i === 5 && <><path d="M41 1H13v28h28" /><path d="M41 0v30" stroke={d} /><rect x="19" y="11" width="18" height="8" fill="#ccc" stroke={d} /></>}
      {i === 6 && <><path d="M13 1v28h28V1" /><path d="M12 1h30" stroke={d} /><rect x="23" y="5" width="8" height="18" fill="#ccc" stroke={d} /></>}
      {i === 7 && <><rect x="13" y="1" width="28" height="28" /><path d="M12 15h30" stroke={d} /><rect x="23" y="7" width="8" height="16" fill="#ccc" stroke={d} /></>}
      {i === 8 && <><path d="M13 29V1h28v28" /><path d="M12 29h30" stroke={d} /><rect x="23" y="7" width="8" height="18" fill="#ccc" stroke={d} /></>}
    </svg>
  );
}

function BorderPos({ c, t }: { c: string; t: number }) {
  return (
    <svg className="h-[30px] w-[30px]" viewBox="0 0 30 30" fill="none" stroke={c} strokeWidth="2">
      {t === 0 && <path d="M6 2v26M24 2v26M4 6h22M4 24h22" />}
      {t === 1 && <rect x="4" y="4" width="22" height="22" />}
      {t === 2 && <rect x="3" y="3" width="24" height="24" rx="2" />}
      {[[4, 4], [26, 4], [4, 26], [26, 26]].map(([x, y], i) => (
        <rect key={i} x={x - 2} y={y - 2} width="4" height="4" fill={t === 0 ? '#377cf7' : '#f2f2f2'} />
      ))}
    </svg>
  );
}

function Cap({ t, tone }: { t: number; tone: 'w' | 'l' | 'd' }) {
  const s = tone === 'w' ? '#fff' : tone === 'l' ? '#b9b9b9' : '#777';
  const f = tone === 'w' ? 'rgba(255,255,255,0.65)' : tone === 'l' ? '#dcdcdc' : '#c9c9c9';
  return (
    <svg className="h-[24px] w-[24px]" viewBox="0 0 24 24" fill={f} stroke={s} strokeWidth="2">
      {t === 0 && <><path d="M8 1h13v22H8z" stroke="none" /><path d="M10 12h11" /><rect x="7" y="9.500" width="5" height="5" fill="#8fb2f4" /></>}
      {t === 1 && <><path d="M23 1H12C5 1 1 6 1 12s4 11 11 11h11" /><path d="M13 12h10" /><rect x="9" y="9.500" width="5" height="5" /></>}
      {t === 2 && <><path d="M23 1H1v22h22" /><path d="M13 12h10" /><rect x="9" y="9.500" width="5" height="5" /></>}
      {t === 3 && <><path d="M1 1h22v22H1z" stroke="none" /><path d="M12 23V12h11" fill="#377cf7" /><rect x="9" y="9" width="5" height="5" fill="#377cf7" /></>}
      {t === 4 && <><path d="M23 2C8 2 1 8 1 23h22z" stroke="none" /><path d="M23 2C8 2 1 8 1 23M12 23V12h11" fill="none" /><rect x="9" y="9" width="5" height="5" /></>}
      {t === 5 && <><path d="M23 2h-9L1 13v10h22z" stroke="none" /><path d="M23 2h-9L1 13v10M12 23V12h11" fill="none" /><rect x="9" y="9" width="5" height="5" /></>}
    </svg>
  );
}

function Seg({ w, active, children }: { w: string; active: string; children: React.ReactNode[] }) {
  return (
    <div className={`flex h-[42px] overflow-hidden rounded-[8px] border-2 border-[#cfcfcf] ${w}`}>
      {children.map((c, i) => (
        <div key={i} className={`flex flex-1 items-center justify-center ${i === 0 ? `-my-[2px] -ml-[2px] ${active}` : i === 1 ? 'border-r-2 border-[#cfcfcf]' : ''}`}>{c}</div>
      ))}
    </div>
  );
}

const small = 'flex h-[41px] w-[102px] items-center justify-center rounded-[8px] border-2';

function Inspector() {
  const hr = 'border-b-2 border-[#dcdcdc]';
  return (
    <div className="flex w-[480px] shrink-0 flex-col rounded-br-[10px] border-l-2 border-[#cdcdcd] bg-[#f2f2f2] text-[22px] text-[#222]">
      <div className={`flex h-[51px] items-center bg-[#fafafa] pl-[10px] ${hr}`}>
        <Align i={0} /><Align i={1} />
        <svg className="h-[24px] w-[26px]" viewBox="0 0 26 24" fill="#b5b5b5"><circle cx="13" cy="3" r="2" /><circle cx="13" cy="12" r="2" /><circle cx="13" cy="21" r="2" /></svg>
        {[3, 4, 5, 6, 7, 8].map((i) => <Align key={i} i={i} />)}
      </div>
      <div className={`h-[147px] pt-[21px] pl-[20px] ${hr}`}>
        <div className="flex gap-[30px]"><Field w="w-[126px]" v="452" u="X" /><Field w="w-[126px]" v="175" u="Y" /><Field w="w-[126px]" v="0" u="°" /></div>
        <div className="mt-[20px] flex">
          <Field w="w-[126px]" v="981" u="W" />
          <svg className="mx-[8px] mt-[9px] h-[22px] w-[14px]" viewBox="0 0 14 22" fill={G}><path d="M0 11h14v10H0z" /><path d="M3 11V6c0-5 7-5 8-1" fill="none" stroke={G} strokeWidth="2" /></svg>
          <Field w="w-[126px]" v="292" u="H" />
          <div className="ml-[30px] mr-[10px] flex h-[42px] w-[58px] items-center justify-center rounded-[8px] border-2 border-[#cfcfcf]">
            <svg className="h-[22px] w-[24px]" viewBox="0 0 24 22" fill="none" stroke={G} strokeWidth="2"><path d="M9.500 2v18.500H1.500z" /><path d="M14.500 2v18.500h8z" fill="#ccc" /></svg>
          </div>
          <div className="flex h-[42px] w-[58px] items-center justify-center rounded-[8px] border-2 border-[#cfcfcf]">
            <svg className="h-[22px] w-[24px]" viewBox="0 0 24 22" fill="none" stroke={G} strokeWidth="2"><path d="M1.500 1.500V9.500H22z" /><path d="M1.500 20.500v-8H22z" fill="#ccc" /></svg>
          </div>
        </div>
      </div>
      <div className={`h-[108px] pt-[22px] pl-[20px] ${hr}`}>
        <SliderRow label="Radius (Smooth Corners)" fill="w-[191px]" value="50" stepGap="gap-[20px]" />
      </div>
      <div className={`h-[202px] pl-[20px] ${hr}`}>
        <Head>RESIZING</Head>
        <div className="flex gap-[30px]">
          <svg className="h-[94px] w-[126px]" viewBox="0 0 126 94" fill="none" stroke="#b9b9b9" strokeWidth="2"><rect x="1" y="1" width="124" height="92" rx="7" fill="#fff" stroke="#d6d6d6" /><path d="M46 10h34M63 10v15M46 82h34M63 82V68M11 30v33M11 46h15M115 30v33M115 46h-15" /><rect x="53.500" y="37" width="19" height="19" rx="2" /></svg>
          <svg className="h-[94px] w-[126px]" viewBox="0 0 126 94" fill="none" stroke="#b0b0b0" strokeWidth="2"><rect x="1" y="1" width="124" height="92" rx="7" fill="#fff" stroke="#d6d6d6" /><path d="M56 10h14M63 10v72M56 82h14M11 46h104M11 39v14M115 39v14" /></svg>
          <svg className="h-[94px] w-[126px]" viewBox="0 0 126 94" fill="none" stroke="#b0b0b0" strokeWidth="2"><rect x="1" y="1" width="124" height="92" rx="7" fill="#ececec" stroke="#c9c9c9" /><rect x="11" y="11" width="32" height="32" fill="#fff" stroke="#c9c9c9" /><rect x="20" y="20" width="13" height="13" fill="#a8db78" stroke="#8bd33e" />{[[11, 11], [27, 11], [43, 11], [11, 27], [43, 27], [11, 43], [27, 43], [43, 43]].map(([x, y], i) => <rect key={i} x={x - 2} y={y - 2} width="4" height="4" fill="#fff" strokeWidth="1.600" />)}</svg>
        </div>
        <div className="flex gap-[30px]"><Lab w="w-[126px] -mt-[1px]">Pin to Edge</Lab><Lab w="w-[126px] -mt-[1px]">Fix Size</Lab><Lab w="w-[126px] -mt-[1px]">Preview</Lab></div>
      </div>
      <div className={`ml-[20px] h-[64px] ${hr}`}><Head icon="+">PROTOTYPING</Head></div>
      <div className={`flex h-[82px] items-center pl-[20px] ${hr}`}>
        <div className="mr-[11px] h-[24px] w-[24px] rounded-[5px] border-2 border-[#d6d6d6] bg-white" />Fix position when scrolling
      </div>
      <div className={`ml-[20px] h-[246px] ${hr}`}>
        <Head>APPEARANCE</Head>
        <div className="flex h-[76px] w-[438px] items-center justify-between rounded-[8px] border-2 border-[#d6d6d6] bg-white pt-[2px] pr-[14px] pl-[19px] italic tracking-[-0.1px]">
          No Layer Style
          <svg className="h-[9px] w-[13px]" viewBox="0 0 13 9" fill="none" stroke="#888" strokeWidth="2"><path d="M1 1.500l5.500 5.500L12 1.500" /></svg>
        </div>
        <div className="mt-[14px] flex gap-[10px]">
          <div className={`${small} border-[#d6d6d6] bg-white`}><Plus /></div>
          <div className={`${small} border-[#e2e2e2] bg-[#f7f7f7]`}><svg className="h-[26px] w-[32px]" viewBox="0 0 32 26" fill="none" stroke="#bbb" strokeWidth="2"><path d="M24 18A11 11 0 1 1 25.500 12M20 10l5.500 4 5-5" /></svg></div>
          <div className={`${small} border-[#e2e2e2] bg-[#f7f7f7]`}><svg className="h-[26px] w-[26px]" viewBox="0 0 26 26" fill="none" stroke="#bbb" strokeWidth="2"><path d="M11 9l5-6c5-5 11 1 7 6l-7 7M15 17l-5 6c-4 4-10-1-7-6l6-6 2-2M2 4l5 3M8 1l1 5M18 20l1 5M20 18l5 4" /></svg></div>
          <div className={`${small} border-[#d6d6d6] bg-white`}><svg className="h-[8px] w-[28px]" viewBox="0 0 28 8" fill={G}><circle cx="4" cy="4" r="2.800" /><circle cx="14" cy="4" r="2.800" /><circle cx="24" cy="4" r="2.800" /></svg></div>
        </div>
        <div className="flex gap-[10px]"><Lab w="w-[102px]">Create</Lab><Lab w="w-[102px]">Update</Lab><Lab w="w-[102px]">Detach</Lab><Lab w="w-[102px]">More</Lab></div>
      </div>
      <div className={`h-[107px] pt-[19px] pl-[20px] ${hr}`}>
        <SliderRow label="Opacity (Normal)" fill="w-[327px]" value="100" unit="%" stepGap="gap-[18px]" />
      </div>
      <div className={`ml-[20px] h-[63px] ${hr}`}><Head>STYLE</Head></div>
      <div className={`ml-[20px] h-[152px] ${hr}`}>
        <div className="flex h-[62px] items-center pr-[26px] font-semibold tracking-[0.2px]"><span className="flex-1">Fills</span><span className="mr-[24px]"><Gear /></span><Plus /></div>
        <div className="flex items-center"><Check /><Well c="bg-[#e4e4e4]" />
          <div className="mr-[12px] flex h-[42px] w-[194px] items-center rounded-[8px] border-2 border-[#d6d6d6] bg-white pl-[9px]"><span className="mr-[6px] text-[19px] text-[#858585]">#</span>E6E6E6</div>
          <Field w="w-[76px]" v="100" u="%" /></div>
        <div className="flex pl-[40px]"><Lab w="w-[102px] mr-[12px]">Color</Lab><Lab w="w-[194px] mr-[12px]">Hex</Lab><Lab w="w-[76px]">Opacity</Lab></div>
      </div>
      <div className={`ml-[20px] h-[152px] ${hr}`}>
        <div className="flex h-[62px] items-center pr-[26px] font-semibold tracking-[0.2px]"><span className="flex-1">Borders</span><span className="mr-[24px]"><Gear blue /></span><Plus /></div>
        <div className="flex items-center"><Check /><Well c="bg-white" />
          <div className="mr-[12px]"><Seg w="w-[194px]" active="bg-[#377cf7]"><BorderPos c="#fff" t={0} /><BorderPos c={G} t={1} /><BorderPos c={G} t={2} /></Seg></div>
          <Field w="w-[76px]" v="1" /></div>
        <div className="flex pl-[40px]"><Lab w="w-[102px] mr-[12px]">Color</Lab><Lab w="w-[194px] mr-[12px]">Inside</Lab><Lab w="w-[76px]">Width</Lab></div>
      </div>
      <div className={`ml-[20px] h-[198px] pt-[20px] pl-[42px] ${hr}`}>
        <div className="flex gap-[34px]">
          <div className="opacity-90"><Seg w="w-[181px]" active="bg-[#8fb2f4]"><Cap t={0} tone="w" /><Cap t={1} tone="l" /><Cap t={2} tone="l" /></Seg></div>
          <Seg w="w-[181px]" active="bg-[#377cf7]"><Cap t={3} tone="w" /><Cap t={4} tone="d" /><Cap t={5} tone="d" /></Seg>
        </div>
        <div className="flex h-[39px] gap-[34px]"><Lab w="w-[181px]">Ends</Lab><Lab w="w-[181px]">Joins</Lab></div>
        <div className="mt-[7px] flex">
          {['mr-[14px]', 'mr-[34px]'].map((m) => (
            <div key={m} className={`flex h-[42px] w-[83px] items-center justify-between rounded-[8px] border-2 border-[#e2e2e2] bg-[#f7f7f7] pr-[7px] pl-[9px] text-[18px] text-[#c2c2c2] ${m}`}>–<Step dim /></div>
          ))}
          <div className="mr-[14px]"><Field w="w-[84px]" v="0" dim /></div><Field w="w-[83px]" v="0" dim />
        </div>
        <div className="flex"><Lab w="w-[83px] mr-[14px]">Start</Lab><Lab w="w-[83px] mr-[34px]">End</Lab><Lab w="w-[83px] mr-[14px]">Dash</Lab><Lab w="w-[83px]">Gap</Lab></div>
      </div>
      <div className={`h-[13px] ${hr}`} />
      <div className={`flex h-[53px] items-center bg-white pl-[22px] ${hr}`}>
        <svg className="mr-[11px] h-[32px] w-[32px]" viewBox="0 0 32 32" fill="#3d2be0"><path d="M7 0h25v24l-8 8H2l-2-2V7z" /><rect x="7.500" y="1.500" width="23" height="23" rx="2" fill="#fff" /><rect x="12" y="6" width="14" height="14" /></svg>
        <b className="flex-1 font-semibold text-[#444]">Anima</b>
        <svg className="mr-[24px] h-[26px] w-[26px]" viewBox="0 0 26 26" fill="#ccc" stroke={G} strokeWidth="2"><circle cx="13" cy="13" r="12" /><circle cx="13" cy="13" r="6" fill="#fff" /></svg>
        <svg className="mr-[24px] h-[26px] w-[22px]" viewBox="0 0 22 26" fill="none" stroke={G} strokeWidth="2"><rect x="1" y="1" width="20" height="24" /><path d="M1 1h10v24H1z" fill="#ccc" /></svg>
        <span className="mr-[23px]"><Gear /></span>
        <svg className="mr-[23px] h-[26px] w-[26px]" viewBox="0 0 26 26" fill="none" stroke={G} strokeWidth="2"><circle cx="13" cy="13" r="12" /><path d="M10 7.500h9v9zM7.500 9.500v9h9z" fill={G} stroke="none" /></svg>
      </div>
      <div className={`flex h-[52px] bg-[#e3e3e3] text-center text-[20px] leading-[50px] font-semibold tracking-[0.700px] text-[#b9b9b9] ${hr}`}>
        <div className="w-[161px] border-r-2 border-[#d4d4d4]">LAYOUT</div>
        <div className="w-[160px] border-r-2 border-[#d4d4d4] bg-[#f4f4f4] text-[#7f7f7f]">PROTOTYPE</div>
        <div className="flex-1">EXPORT</div>
      </div>
      <div className={`h-[64px] pl-[20px] ${hr}`}><Head icon=">">FLOW</Head></div>
      <div className={`h-[64px] pl-[20px] ${hr}`}><Head icon=">">SMART LAYERS</Head></div>
      <div className={`flex h-[64px] items-center pl-[23px] ${hr}`}>
        <div className="w-[178px] text-[20px] font-semibold tracking-[0.400px] text-[#7f7f7f]">INTERACTION</div><Step />
        <div className="ml-auto mr-[20px] h-[41px] w-[107px] rounded-[8px] border border-b-2 border-[#cfcfcf] bg-white text-center leading-[38px]">Create</div>
      </div>
      <div className="mt-[12px] ml-[21px] h-[41px] w-[438px] rounded-[8px] border border-b-2 border-[#cfcfcf] bg-white text-center leading-[38px]">Preview in Browser</div>
    </div>
  );
}

/* ---------- dock ---------- */

function App1({ children, dot }: Kids & { dot?: boolean }) {
  return (
    <svg className="h-[159px] w-[134px] shrink-0" viewBox="0 0 134 159">
      {children}
      {dot && <circle cx="67" cy="151" r="4" fill="#000" />}
    </svg>
  );
}

function Sep({ w }: { w: string }) {
  return <div className={`flex shrink-0 justify-center ${w}`}><div className="mt-[21px] h-[118px] w-[2px] bg-[#26262c]" /></div>;
}

function Gem() {
  return (
    <>
      <path d="M6 60L32 26l35-5 34 5 26 34-60 71z" fill="#fdb52c" />
      <path d="M6 60h121L67 131z" fill="#ea7a26" /><path d="M31 60h72L67 131z" fill="#f2a43a" />
      <path d="M31 60L67 21l36 39z" fill="#fbe594" /><path d="M32 26l35-5-36 39zM101 26l-34-5 36 39z" fill="#f7cf4b" /><path d="M6 60l26-34-1 34zM127 60l-26-34 2 34z" fill="#f0a92c" />
      <path d="M6 60h121" stroke="#fff" strokeOpacity=".7" />
    </>
  );
}

const spokes = Array.from({ length: 36 }, (_, i) => i * 10);
const ticks = Array.from({ length: 36 }, (_, i) => i * 10);

function Dock() {
  return (
    <div className="flex h-[160px] shrink-0 items-end justify-start bg-linear-to-r from-[#0a0b18] via-[#0c0a12] to-[#1d1517] pl-[640px]">
      <svg className="absolute h-0 w-0">
        <defs>
          <linearGradient id="finL" x1="0" y1="0" x2="0" y2="1"><stop offset="0" stopColor="#5fc9f8" /><stop offset="1" stopColor="#3b6fea" /></linearGradient>
          <linearGradient id="finR" x1="0" y1="0" x2="0" y2="1"><stop offset="0" stopColor="#f6f6f8" /><stop offset="1" stopColor="#dbe6f2" /></linearGradient>
          <linearGradient id="silver" x1="0" y1="0" x2="0" y2="1"><stop offset="0" stopColor="#cbd8de" /><stop offset="1" stopColor="#76787a" /></linearGradient>
          <linearGradient id="white" x1="0" y1="0" x2="0" y2="1"><stop offset="0" stopColor="#fff" /><stop offset="1" stopColor="#dfe1e4" /></linearGradient>
          <linearGradient id="store" x1="0" y1="0" x2="0" y2="1"><stop offset="0" stopColor="#50b7f8" /><stop offset="1" stopColor="#2352e6" /></linearGradient>
          <linearGradient id="note" x1="0" y1="0" x2="0" y2="1"><stop offset="0" stopColor="#e8485a" /><stop offset=".5" stopColor="#a55ad8" /><stop offset="1" stopColor="#4d9bf5" /></linearGradient>
          <radialGradient id="saf"><stop offset="0" stopColor="#58c7d6" /><stop offset="1" stopColor="#2468e0" /></radialGradient>
          <linearGradient id="key" x1="0" y1="0" x2="0" y2="1"><stop offset="0" stopColor="#3f96ec" /><stop offset="1" stopColor="#69c4f6" /></linearGradient>
          <linearGradient id="sky" x1="0" y1="0" x2="0" y2="1"><stop offset="0" stopColor="#3a72d4" /><stop offset="1" stopColor="#a9cff2" /></linearGradient>
          <linearGradient id="bin" x1="0" y1="0" x2="1" y2="0"><stop offset="0" stopColor="#c6c5c8" /><stop offset=".5" stopColor="#efeff0" /><stop offset="1" stopColor="#bdbcbf" /></linearGradient>
        </defs>
      </svg>
      <div className="flex h-[158px] w-[2816px] overflow-hidden rounded-t-[12px] bg-linear-to-r from-[#51535f] via-[#4f535c] via-60% to-[#63555a] pl-[8px] [font-family:Inter,'Noto_Sans_CJK_KR',sans-serif]">
        <App1 dot>
          <rect x="16" y="28" width="102" height="96" rx="4" fill="url(#finR)" />
          <path d="M20 28h49c-6 17-10 34-11 54h16c0 16 1 30 3 42H20c-3 0-4-1-4-4V32c0-3 1-4 4-4z" fill="url(#finL)" />
          <path d="M69 28c-6 17-10 34-11 54h16c0 16 1 30 3 42M35 89c17 18 45 18 62 0M44 52v11M90 52v11" fill="none" stroke="#16202c" strokeWidth="3.500" strokeLinecap="round" />
        </App1>
        <App1>
          <circle cx="67" cy="76" r="54" fill="url(#silver)" stroke="#dbe6ea" strokeWidth="3" />
          <path d="M99 43c-20 1-34 11-45 27-12 0-18 4-24 14 6-1 12-1 17 1l-3 11 12 2 8 20c7-6 10-14 10-22 15-11 24-27 25-53z" fill="#44474a" /><circle cx="79" cy="66" r="7.500" fill="#8d989e" /><path d="M40 96c-8 6-9 14-8 20 7-3 13-8 15-16z" fill="#505356" />
        </App1>
        <App1>
          <path d="M13 40l88-15 17 92-90 10z" fill="#6a6f74" />
          <path d="M16 34l82-13 14 89-84 14z" fill="#fafafa" /><path d="M16 34l82-13 4 25-82 14z" fill="#d35f57" />
          <g transform="rotate(-9 62 76)"><text x="60" y="49" textAnchor="middle" fontSize="22" fill="#fff">9월</text><text x="64" y="106" textAnchor="middle" fontSize="52" fontWeight="300" fill="#222">27</text></g>
          <path d="M28 124l84-14 2 6-86 14z" fill="#888c90" />
        </App1>
        <App1>
          <path d="M18 31l83-14 16 102-83 13z" fill="#fbfaf7" /><path d="M18 31l83-14 3 18-83 13z" fill="#f5cf4d" />
          {[0, 1, 2, 3, 4, 5, 6, 7, 8].map((i) => <path key={i} d={`M${23 + i * 1.300} ${56 + i * 8.500}l82-13`} stroke="#c9c9c9" strokeWidth="1.500" />)}
        </App1>
        <App1>
          <circle cx="67" cy="76" r="54" fill="url(#white)" stroke="#c9ccd0" strokeWidth="2" />
          <path d="M53 46l38-7v55a10 8 0 1 1-7-8V55l-24 5v42a10 8.500 0 1 1-7-9z" fill="url(#note)" />
        </App1>
        <App1>
          <circle cx="67" cy="76" r="55" fill="#1a3fc8" /><circle cx="67" cy="75" r="53" fill="url(#store)" />
          <g stroke="#fff" strokeWidth="9" strokeLinecap="round"><path d="M72 44L46 88M62 44l30 55M36 84h62" /><path d="M39 97l1.500-3" /></g>
        </App1>
        <App1 dot>
          <circle cx="67" cy="76" r="55" fill="#f2f3f5" /><circle cx="67" cy="76" r="49" fill="url(#saf)" />
          {spokes.map((a) => <path key={a} d="M67 30v7" stroke="#fff" strokeWidth="1.500" transform={`rotate(${a} 67 76)`} />)}
          <path d="M103 41L74 84 61 69z" fill="#e2392f" /><path d="M34 110l27-41 13 15z" fill="#f1f1f1" />
        </App1>
        <App1>
          <path d="M92 21L12 93v6l9 6 71-52z" fill="#2b6fb2" /><path d="M21 47l-9 7v5l80 72V98z" fill="#3580c8" /><path d="M92 21l29 13v84l-29 13z" fill="#4ba3ec" />
        </App1>
        <App1 dot>
          <rect x="14" y="22" width="106" height="107" rx="10" fill="#f6e14b" />
          <ellipse cx="67" cy="71" rx="41" ry="33" fill="#381e1e" /><path d="M44 92l-3 23 22-13z" fill="#381e1e" />
          <text x="67" y="82" textAnchor="middle" fontSize="27" fontWeight="800" fill="#f6e14b" textLength="60" lengthAdjust="spacingAndGlyphs">TALK</text>
        </App1>
        <App1>
          <rect x="63" y="66" width="7" height="58" fill="#b8c2cf" /><ellipse cx="67" cy="124" rx="24" ry="9" fill="#cfdae6" />
          <path d="M26 22h82l9 41H17z" fill="url(#key)" /><path d="M17 62h100v5H17z" fill="#2d7fc4" />
          <path d="M36 28h60l1 29H34z" fill="#fff" /><text x="38" y="34.500" fontSize="6" fontWeight="700" fill="#333">KEYNOTE</text>
          <circle cx="52" cy="46" r="10" fill="#e86ad0" /><path d="M52 46V36a10 10 0 0 0-10 10z" fill="#3f86e8" /><path d="M52 46h10a10 10 0 0 1-10 10z" fill="#f1c83c" /><path d="M52 46v10a10 10 0 0 1-10-10z" fill="#7fd254" />
          <path d="M70 40h18M70 45h16M70 50h18M70 54h15" stroke="#9aa6b4" strokeWidth="1.500" />
        </App1>
        <App1>
          <g transform="rotate(-9 67 76)">
            <rect x="24" y="22" width="82" height="104" fill="#fbfbfb" /><rect x="24" y="22" width="82" height="18" fill="#ef9434" />
            <text x="30" y="35.500" fontSize="13" fill="#fff">PAGES</text><rect x="30" y="46" width="42" height="30" fill="#3c8fe8" /><path d="M50 74c-8-12-6-22 2-24 9 4 9 14 2 24z" fill="#f29a35" />
            <path d="M77 48h23M77 54h23M77 60h22M77 66h23M77 72h21M30 84h68M30 90h70M30 96h64M30 104h70M30 110h66M30 116h50" stroke="#a9a9a9" strokeWidth="1.500" />
          </g>
          <path d="M107 18l7 2-22 79-8-3z" fill="#e9a03c" /><path d="M92 98l-8-3-9 28 1 10 5-8z" fill="#333" />
        </App1>
        <App1 dot><Gem /></App1>
        <App1>
          <rect x="37" y="28" width="84" height="96" rx="4" fill="#2e5fbf" /><path d="M37 52V32c0-3 1-4 4-4h76c3 0 4 1 4 4v20z" fill="#5ba3e8" /><path d="M37 52h84v24H37z" fill="#3f77cf" /><path d="M37 100h84v20c0 3-1 4-4 4H41c-3 0-4-1-4-4z" fill="#1f4190" />
          <rect x="12" y="48" width="56" height="56" rx="4" fill="#2350ae" /><text x="40" y="91" textAnchor="middle" fontSize="41" fontWeight="600" fill="#fff" textLength="40" lengthAdjust="spacingAndGlyphs">W</text>
        </App1>
        <App1>
          <circle cx="73" cy="76" r="48" fill="#c95a38" /><path d="M73 28a48 48 0 0 1 48 48H73z" fill="#f0916f" /><path d="M73 28a48 48 0 0 0-48 48h48z" fill="#e87f5e" />
          <rect x="11" y="48" width="56" height="56" rx="4" fill="#b7432a" /><text x="40" y="91" textAnchor="middle" fontSize="41" fontWeight="600" fill="#fff">P</text>
        </App1>
        <App1>
          <rect x="12" y="25" width="110" height="102" rx="4" fill="url(#silver)" />
          <circle cx="67" cy="76" r="44" fill="#1f2123" />
          {ticks.map((a) => <path key={a} d="M67 38v6" stroke="#b9bbbb" strokeWidth="3" transform={`rotate(${a} 67 77)`} />)}
          <circle cx="67" cy="77" r="30" fill="none" stroke="#a9abab" strokeWidth="7" />
          <path d="M67 77H97M67 77L52 51M67 77l-15 26" stroke="#a9abab" strokeWidth="5" /><circle cx="67" cy="77" r="6" fill="#d0d2d2" />
          <circle cx="109" cy="36" r="24" fill="#e04a3f" /><text x="109" y="46" textAnchor="middle" fontSize="27" fill="#fff">1</text>
        </App1>
        <Sep w="w-[60px]" />
        <App1 dot>
          <rect x="12" y="21" width="110" height="110" rx="9" fill="#414141" />
          <path d="M35 54l63-19v27L73 67l25 9v24L35 117V93l28-8-28-9z" fill="#f19b38" /><path d="M73 67l25 9v24L63 85z" fill="#e98c2c" opacity=".6" />
        </App1>
        <App1 dot>
          <circle cx="67" cy="76" r="55" fill="#f6cf56" />
          <path d="M67 76L19.400 48.500A55 55 0 0 0 67 131l24-41z" fill="#4c9c5d" /><path d="M19.400 48.500A55 55 0 0 1 114.600 48.500H67L43 90z" fill="#cf5446" />
          <path d="M91 90l-24 41a55 55 0 0 0 47.600-82.500H67z" fill="#f6cf56" />
          <circle cx="67" cy="76" r="25" fill="#f4f4f4" /><circle cx="67" cy="76" r="20.500" fill="#5488ee" />
        </App1>
        <App1 dot>
          <g transform="rotate(-7 67 76)"><rect x="24" y="27" width="82" height="100" fill="#f6f6f6" stroke="#f6f6f6" strokeWidth="4" strokeDasharray="4 3" /><rect x="30" y="33" width="70" height="88" fill="url(#sky)" /></g>
          <path d="M37 36c12 8 18 20 20 34 8-2 14 2 17 10 8 4 14 6 18 14-8 0-14-2-20-6-2 8-8 14-16 18l4-16c-10-2-16-8-15-18-6-10-10-22-8-36z" fill="#5a4630" /><path d="M42 80l18 2-8 12z" fill="#c9b48c" /><path d="M74 78l10 2-6 6z" fill="#f2efe8" />
          <circle cx="98" cy="105" r="26" fill="none" stroke="#5b6678" strokeWidth="2.500" opacity=".7" /><circle cx="98" cy="105" r="18" fill="none" stroke="#5b6678" strokeWidth="1.500" opacity=".6" />
          <rect x="75" y="12" width="59" height="48" rx="24" fill="#e04a3f" /><text x="104.500" y="45" textAnchor="middle" fontSize="26" fill="#fff">428</text>
        </App1>
        <Sep w="w-[62px]" />
        <App1>
          <path d="M17 36c0-3 1-4 4-4h88c3 0 4 1 4 4v70H17z" fill="#7cc0ee" />
          <path d="M25 26h52l29 26v80H25z" fill="#fbfbfb" /><path d="M76 26c4 8 4 14 3 24 8 0 18 0 27 2z" fill="#d9d9d9" />
          <g transform="translate(31 35) scale(0.520)"><Gem /></g>
          <text x="65" y="125" textAnchor="middle" fontSize="14" fill="#555">PLUGIN</text>
        </App1>
        <App1>
          <path d="M24 34l14-12 8-6 10 6 8-8 10 12 12-6 14 16-10 10H34z" fill="#e9e9e9" /><path d="M38 24l10 14M56 18l8 20M76 22l-6 14M92 26l-8 12" stroke="#5a5553" strokeWidth="3" /><path d="M60 26l8 6-10 4z" fill="#3ba3d8" /><path d="M80 26l10 8-12 4z" fill="#a5573a" />
          <path d="M20 32c6 10 84 10 90 0l-9 92c-8 10-60 10-70 0z" fill="url(#bin)" opacity=".93" /><path d="M20 32c6 10 84 10 90 0" fill="none" stroke="#8d8b8e" strokeWidth="2" />
        </App1>
      </div>
    </div>
  );
}

export default function App() {
  return (
    <div className="flex h-[2304px] w-[4096px] flex-col overflow-hidden bg-linear-to-r from-[#464a6e] to-[#7d7480] [font-family:Inter,'Noto_Sans_CJK_KR',sans-serif]">
      <MenuBar />
      <div className="mt-[2px] flex h-[2098px] shrink-0 flex-col overflow-hidden rounded-t-[10px]">
        <Toolbar />
        <div className="flex min-h-0 flex-1 bg-[#0e0c14]">
          <Sidebar />
          <Canvas />
          <Inspector />
        </div>
      </div>
      <Dock />
    </div>
  );
}
